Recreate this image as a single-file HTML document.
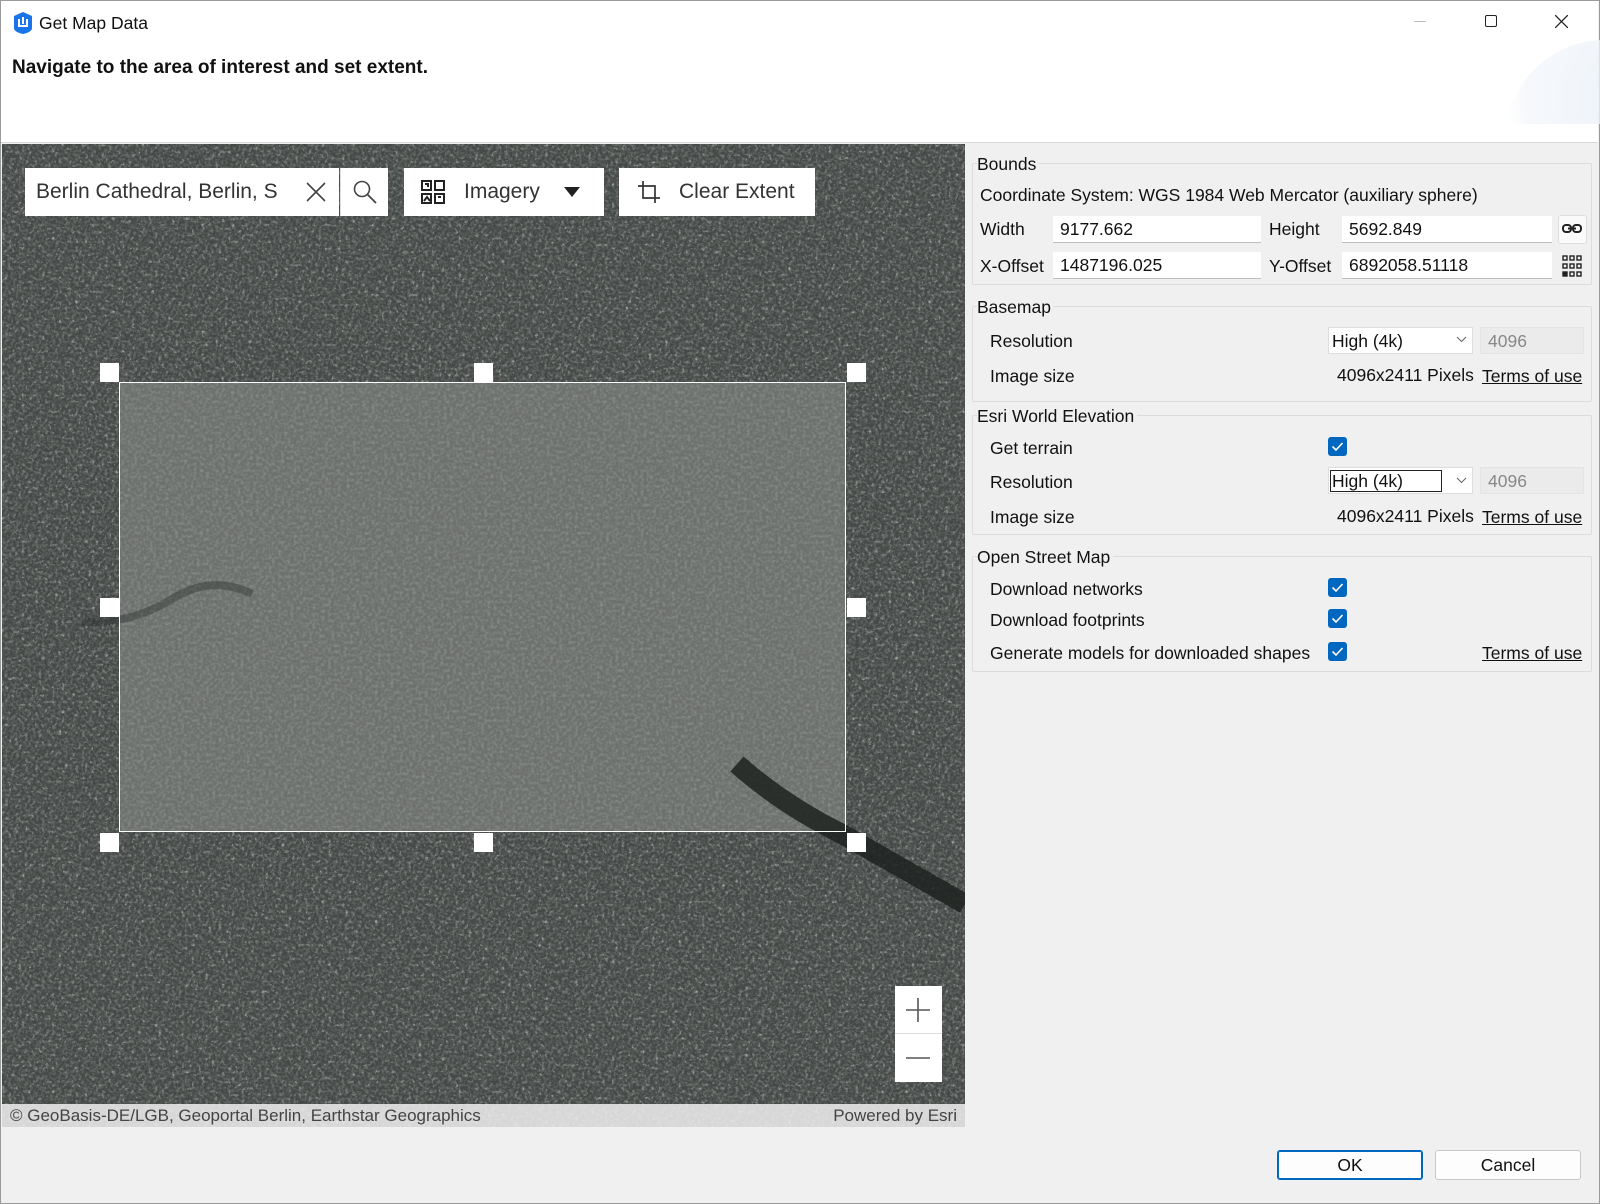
<!DOCTYPE html>
<html><head><meta charset="utf-8">
<style>
*{box-sizing:border-box;margin:0;padding:0}
body{width:1600px;height:1204px;position:relative;background:#f0f0f0;font-family:"Liberation Sans",sans-serif;color:#111;overflow:hidden}
.abs{position:absolute}
.win{position:absolute;left:0;top:0;width:1600px;height:1204px;border:1px solid #9a9a9a;background:#f0f0f0}
.top{position:absolute;left:1px;top:1px;width:1597px;height:142px;background:#fff;border-bottom:1px solid #d8d8d8}
.map{position:absolute;left:2px;top:144px;width:963px;height:983px;overflow:hidden;background:#3e4240}
.sel{position:absolute;left:119px;top:382px;width:727px;height:450px;border:1px solid #fff}
.h{position:absolute;width:19px;height:19px;background:#fff}
.tb{position:absolute;top:168px;height:48px;background:#fff;font-size:21px;color:#333;display:flex;align-items:center}
.lab{position:absolute;font-size:17.5px;color:#111;white-space:nowrap}
.grp{position:absolute;border:1px solid #dcdcdc;border-radius:2px}
.inp{position:absolute;background:#fff;border-bottom:1px solid #bdbdbd;height:27px;font-size:17.5px;padding:3px 7px;color:#111}
.cb{position:absolute;width:19px;height:19px;background:#0067c0;border-radius:3px}
.cb svg{display:block}
.lnk{position:absolute;font-size:17.5px;text-decoration:underline;color:#111}
.btn{position:absolute;top:1150px;height:30px;background:#fdfdfd;border:1px solid #c8c8c8;border-radius:3px;font-size:17.5px;text-align:center;line-height:28px}
</style></head><body>
<div class="win"></div>
<div class="top"></div>
<svg class="abs" style="left:12px;top:11px" width="22" height="24" viewBox="0 0 22 24"><path d="M11 1 L20 5 V17 Q20 21 11 23 Q2 21 2 17 V5 Z" fill="#1a73e8"/><path d="M7 8 V15 H15 V8 M11 6 V13" stroke="#fff" stroke-width="2" fill="none"/></svg>
<div class="lab" style="left:39px;top:13px;font-size:17.5px">Get Map Data</div>
<div class="abs" style="left:1414px;top:21px;width:12px;height:1px;background:#bbb"></div>
<div class="abs" style="left:1485px;top:15px;width:12px;height:12px;border:1.3px solid #222;border-radius:2px"></div>
<svg class="abs" style="left:1555px;top:15px" width="13" height="13"><path d="M0 0L13 13M13 0L0 13" stroke="#222" stroke-width="1.3"/></svg>
<div class="lab" style="left:12px;top:57px;font-size:19px;font-weight:bold">Navigate to the area of interest and set extent.</div>
<div class="abs" style="left:1505px;top:40px;width:200px;height:200px;border-radius:50%;background:radial-gradient(circle at 70% 30%,#e6eef7,#f4f7fb 60%,#fff 70%);opacity:.8;clip-path:inset(0 0 calc(100% - 84px) 0)"></div>

<div class="map">
<svg width="963" height="983" style="display:block">
 <defs>
  <filter id="n" x="0" y="0" width="100%" height="100%">
   <feTurbulence type="fractalNoise" baseFrequency="0.35" numOctaves="2" seed="3"/>
   <feColorMatrix type="matrix" values="0 0 0 0 0.15  0 0 0 0 0.16  0 0 0 0 0.15  0 0 0 -2.2 1.3"/>
  </filter>
  <filter id="nl" x="0" y="0" width="100%" height="100%">
   <feTurbulence type="fractalNoise" baseFrequency="0.3" numOctaves="2" seed="11"/>
   <feColorMatrix type="matrix" values="0 0 0 0 0.6  0 0 0 0 0.62  0 0 0 0 0.6  0 0 0 2.4 -1.35"/>
  </filter>
  <filter id="n2" x="0" y="0" width="100%" height="100%">
   <feTurbulence type="fractalNoise" baseFrequency="0.32" numOctaves="2" seed="7"/>
   <feColorMatrix type="matrix" values="0 0 0 0 0.25  0 0 0 0 0.27  0 0 0 0 0.26  0 0 0 -2.0 1.2"/>
  </filter>
  <pattern id="st" width="24" height="24" patternUnits="userSpaceOnUse" patternTransform="rotate(28)">
   <path d="M0 0H24M0 0V24" stroke="#8a8d88" stroke-width="1.2" opacity=".3"/>
  </pattern>
 </defs>
 <rect width="963" height="983" fill="#444846"/>
 <rect width="963" height="983" filter="url(#nl)"/>
 <rect width="963" height="983" fill="url(#st)"/>
 <rect width="963" height="983" filter="url(#n)"/>
 <g transform="translate(117,238)">
  <rect width="727" height="450" fill="#6d706d"/>
  <rect width="727" height="450" fill="url(#st)" opacity=".8"/>
  <rect width="727" height="450" filter="url(#n2)"/>
 </g>
 <path d="M735 620 Q780 660 840 690 L963 760" stroke="#1d2220" stroke-width="20" fill="none" opacity=".85"/>
 <path d="M250 450 Q210 430 170 455 Q130 480 80 478" stroke="#2a2f2c" stroke-width="8" fill="none" opacity=".4"/>
</svg>
</div>
<div class="sel"></div>
<div class="h" style="left:100px;top:363px"></div><div class="h" style="left:474px;top:363px"></div><div class="h" style="left:847px;top:363px"></div>
<div class="h" style="left:100px;top:598px"></div><div class="h" style="left:847px;top:598px"></div>
<div class="h" style="left:100px;top:833px"></div><div class="h" style="left:474px;top:833px"></div><div class="h" style="left:847px;top:833px"></div>

<div class="tb" style="left:25px;width:314px;padding-left:11px">Berlin Cathedral, Berlin, S</div>
<svg class="abs" style="left:306px;top:182px" width="20" height="20"><path d="M1 1L19 19M19 1L1 19" stroke="#444" stroke-width="1.6"/></svg>
<div class="tb" style="left:340px;width:48px;border-left:1px solid #ddd;justify-content:center"><svg width="26" height="26"><circle cx="10" cy="10" r="7.5" stroke="#444" stroke-width="1.6" fill="none"/><path d="M15.5 15.5L24 24" stroke="#444" stroke-width="1.8"/></svg></div>
<div class="tb" style="left:404px;width:200px;padding-left:16px"><svg width="26" height="26" viewBox="0 0 26 26" fill="none" stroke="#222" stroke-width="2"><rect x="2" y="2" width="9" height="9"/><rect x="15" y="2" width="9" height="9"/><rect x="2" y="15" width="9" height="9"/><rect x="15" y="15" width="9" height="9"/><path d="M5 5h3v3M18 18h3M4 22l3-4 3 4"/></svg><span style="margin-left:18px">Imagery</span><svg style="margin-left:24px" width="16" height="10"><path d="M0 0H16L8 10Z" fill="#222"/></svg></div>
<div class="tb" style="left:619px;width:196px;padding-left:18px"><svg width="24" height="24" fill="none" stroke="#333" stroke-width="1.7"><path d="M6 1V18H23M1 6H18V23"/></svg><span style="margin-left:18px">Clear Extent</span></div>

<div class="abs" style="left:895px;top:986px;width:47px;height:96px;background:#fff"></div>
<div class="abs" style="left:895px;top:1033px;width:47px;height:1px;background:#ddd"></div>
<svg class="abs" style="left:905px;top:997px" width="26" height="26"><path d="M13 1V25M1 13H25" stroke="#555" stroke-width="1.6"/></svg>
<svg class="abs" style="left:905px;top:1045px" width="26" height="26"><path d="M1 13H25" stroke="#555" stroke-width="1.6"/></svg>
<div class="abs" style="left:2px;top:1104px;width:963px;height:23px;background:rgba(240,240,240,.85);font-size:17px;color:#444;line-height:23px;padding:0 8px;display:flex;justify-content:space-between"><span>© GeoBasis-DE/LGB, Geoportal Berlin, Earthstar Geographics</span><span>Powered by Esri</span></div>

<div class="grp" style="left:972px;top:163px;width:620px;height:122px"></div>
<div class="lab" style="left:977px;top:154px;background:#f0f0f0;padding-right:3px">Bounds</div>
<div class="lab" style="left:980px;top:185px">Coordinate System: WGS 1984 Web Mercator (auxiliary sphere)</div>
<div class="lab" style="left:980px;top:219px">Width</div>
<div class="inp" style="left:1053px;top:216px;width:208px">9177.662</div>
<div class="lab" style="left:1269px;top:219px">Height</div>
<div class="inp" style="left:1342px;top:216px;width:210px">5692.849</div>
<div class="abs" style="left:1558px;top:215px;width:29px;height:29px;background:#fafafa;border:1px solid #ddd;border-radius:3px"></div>
<svg class="abs" style="left:1562px;top:222px" width="20" height="14"><rect x="1" y="3" width="8" height="7" rx="3" stroke="#222" stroke-width="2" fill="none"/><rect x="11" y="3" width="8" height="7" rx="3" stroke="#222" stroke-width="2" fill="none"/><path d="M6 6.5H14" stroke="#222" stroke-width="2"/></svg>
<div class="lab" style="left:980px;top:256px">X-Offset</div>
<div class="inp" style="left:1053px;top:252px;width:208px">1487196.025</div>
<div class="lab" style="left:1269px;top:256px">Y-Offset</div>
<div class="inp" style="left:1342px;top:252px;width:210px">6892058.51118</div>
<svg class="abs" style="left:1562px;top:255px" width="20" height="22" fill="none" stroke="#222" stroke-width="1.4"><rect x="1" y="1" width="4" height="4"/><rect x="8" y="1" width="4" height="4"/><rect x="15" y="1" width="4" height="4"/><rect x="1" y="9" width="4" height="4"/><rect x="8" y="9" width="4" height="4"/><rect x="15" y="9" width="4" height="4"/><rect x="1" y="17" width="4" height="4" fill="#222"/><rect x="8" y="17" width="4" height="4"/><rect x="15" y="17" width="4" height="4"/></svg>

<div class="grp" style="left:972px;top:306px;width:620px;height:96px"></div>
<div class="lab" style="left:977px;top:297px;background:#f0f0f0;padding-right:3px">Basemap</div>
<div class="lab" style="left:990px;top:331px">Resolution</div>
<div class="inp" style="left:1328px;top:327px;width:145px;border:1px solid #ddd;padding-left:3px">High (4k)</div>
<svg class="abs" style="left:1456px;top:336px" width="11" height="7"><path d="M1 1L5.5 5.5L10 1" stroke="#666" fill="none"/></svg>
<div class="inp" style="left:1480px;top:327px;width:104px;background:#ebebeb;border:1px solid #e4e4e4;color:#888">4096</div>
<div class="lab" style="left:990px;top:366px">Image size</div>
<div class="lab" style="left:1337px;top:365px">4096x2411 Pixels</div>
<div class="lnk" style="left:1482px;top:366px">Terms of use</div>

<div class="grp" style="left:972px;top:415px;width:620px;height:120px"></div>
<div class="lab" style="left:977px;top:406px;background:#f0f0f0;padding-right:3px">Esri World Elevation</div>
<div class="lab" style="left:990px;top:438px">Get terrain</div>
<div class="cb" style="left:1328px;top:437px"><svg width="19" height="19"><path d="M4.5 9.5L8 13L14.5 6" stroke="#fff" stroke-width="1.6" fill="none"/></svg></div>
<div class="lab" style="left:990px;top:472px">Resolution</div>
<div class="inp" style="left:1328px;top:467px;width:145px;border:1px solid #ddd;padding-left:2px"><span style="border:1.5px solid #222;padding:0 38px 0 1px;margin-left:-1px">High (4k)</span></div>
<svg class="abs" style="left:1456px;top:477px" width="11" height="7"><path d="M1 1L5.5 5.5L10 1" stroke="#666" fill="none"/></svg>
<div class="inp" style="left:1480px;top:467px;width:104px;background:#ebebeb;border:1px solid #e4e4e4;color:#888">4096</div>
<div class="lab" style="left:990px;top:507px">Image size</div>
<div class="lab" style="left:1337px;top:506px">4096x2411 Pixels</div>
<div class="lnk" style="left:1482px;top:507px">Terms of use</div>

<div class="grp" style="left:972px;top:556px;width:620px;height:116px"></div>
<div class="lab" style="left:977px;top:547px;background:#f0f0f0;padding-right:3px">Open Street Map</div>
<div class="lab" style="left:990px;top:579px">Download networks</div>
<div class="cb" style="left:1328px;top:578px"><svg width="19" height="19"><path d="M4.5 9.5L8 13L14.5 6" stroke="#fff" stroke-width="1.6" fill="none"/></svg></div>
<div class="lab" style="left:990px;top:610px">Download footprints</div>
<div class="cb" style="left:1328px;top:609px"><svg width="19" height="19"><path d="M4.5 9.5L8 13L14.5 6" stroke="#fff" stroke-width="1.6" fill="none"/></svg></div>
<div class="lab" style="left:990px;top:643px">Generate models for downloaded shapes</div>
<div class="cb" style="left:1328px;top:642px"><svg width="19" height="19"><path d="M4.5 9.5L8 13L14.5 6" stroke="#fff" stroke-width="1.6" fill="none"/></svg></div>
<div class="lnk" style="left:1482px;top:643px">Terms of use</div>

<div class="btn" style="left:1277px;width:146px;border:1px solid #0067c0;box-shadow:inset 0 0 0 1px #0067c0">OK</div>
<div class="btn" style="left:1435px;width:146px">Cancel</div>
</body></html>
